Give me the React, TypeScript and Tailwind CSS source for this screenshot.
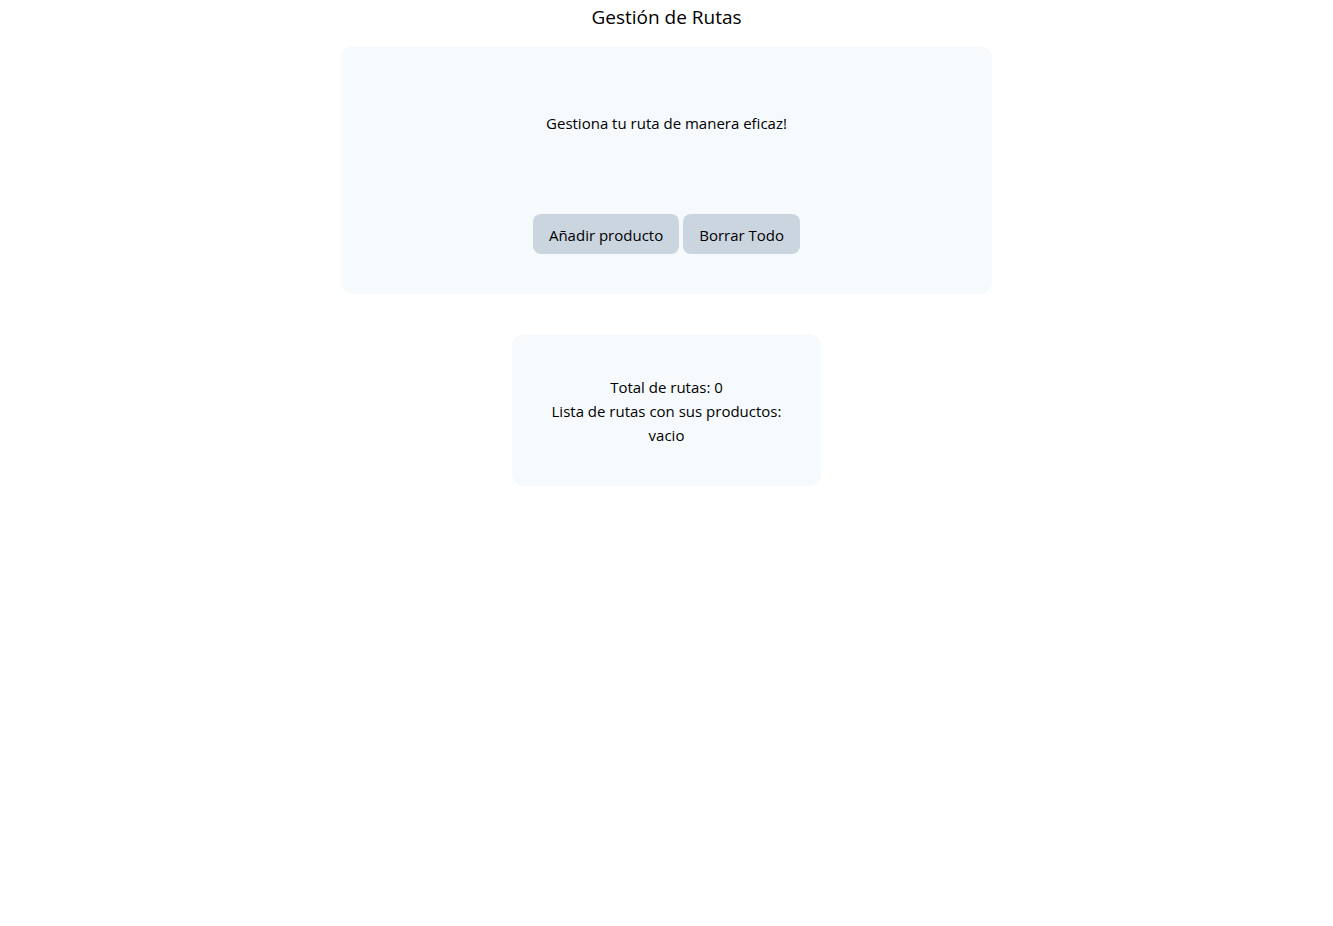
const buttonClass = "rounded-lg bg-[#cbd5e0] px-4 pt-[9px] pb-[7px] hover:bg-[#b8c4d2]";

export default function App() {
  return (
    <main className="flex flex-col items-center font-['Open_Sans','Noto_Sans',sans-serif] text-[15px] leading-6 text-black">
      <h1 className="pt-[3px] text-[19px] leading-7">Gestión de Rutas</h1>
      <section className="mt-[15px] flex w-[calc(50%-16px)] flex-col items-center rounded-xl bg-[#f6fafd] p-10 text-center">
        <p className="mt-[25px] mb-[79px]">Gestiona tu ruta de manera eficaz!</p>
        <div className="flex gap-1">
          <button type="button" className={buttonClass}>Añadir producto</button>
          <button type="button" className={buttonClass}>Borrar Todo</button>
        </div>
      </section>
      <section className="mt-10 rounded-xl bg-[#f6fafd] px-10 pt-[41px] pb-[39px] text-center">
        <p>Total de rutas: 0</p>
        <p>Lista de rutas con sus productos:</p>
        <p>vacio</p>
      </section>
    </main>
  );
}
